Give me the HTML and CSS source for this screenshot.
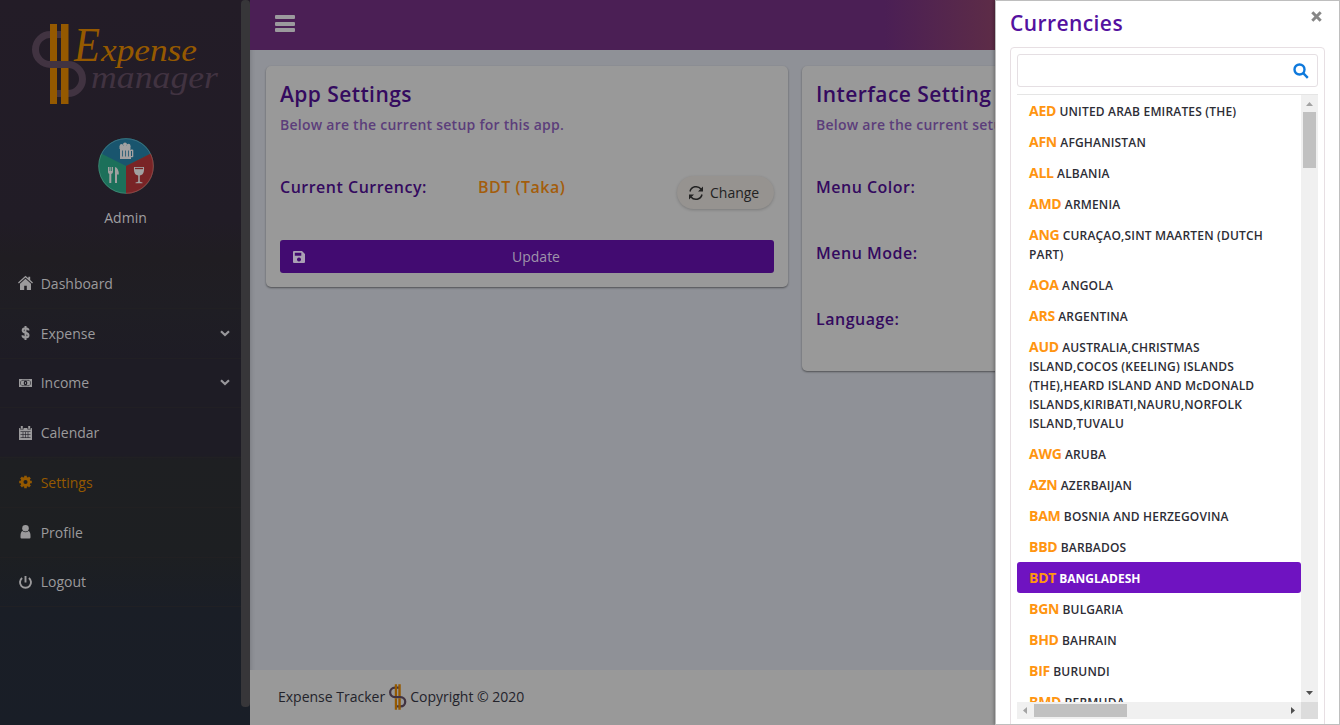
FILE: index.html
```html
<!DOCTYPE html>
<html lang="en">
<head>
<meta charset="utf-8">
<title>Expense Manager</title>
<link rel="stylesheet" href="styles.css">
</head>
<body>
<svg width="0" height="0" class="defs">
  <symbol id="dollar" viewBox="0 0 56 80">
    <path d="M34 10.500H18.500a15 15 0 0 0 0 30H36a14.500 14.500 0 0 1 0 29H25" fill="none" stroke="#413341" stroke-width="7"/>
    <path d="M18 0h7v37h-7zM29 0h7.500v37H29zM18 44h7v36h-7zM29 44h7.500v36H29z" fill="#955900"/>
  </symbol>
</svg>
<div class="app">
  <aside class="sidebar">
    <div class="side-body">
      <svg class="logo" width="200" height="90" viewBox="0 0 200 90">
        <use href="#dollar" x="0" y="4" width="56" height="80"/>
        <text class="logo-cap" x="42" y="41" textLength="26" lengthAdjust="spacingAndGlyphs">E</text>
        <text class="logo-top" x="69" y="41" textLength="96" lengthAdjust="spacingAndGlyphs">xpense</text>
        <text class="logo-bottom" x="59" y="68" textLength="127" lengthAdjust="spacingAndGlyphs">manager</text>
      </svg>
      <svg class="avatar" width="56" height="56" viewBox="0 0 56 56">
        <circle cx="28" cy="28" r="27.800" fill="#1c705a"/>
        <path d="M28 28 3.200 15.500A27.800 27.800 0 0 1 52.800 15.500Z" fill="#19556e"/>
        <path d="M28 28 52.800 15.500A27.800 27.800 0 0 1 28 55.800Z" fill="#792426"/>
        <circle cx="28" cy="28" r="27.300" fill="none" stroke="#fff" stroke-opacity=".14"/>
        <g fill="#a1a1a1">
          <path d="M22 10h10v1.500h2.500q.8 0 .8.800v6q0 1-1 1H33V21H22Zm11 3v5h1v-5Z"/>
          <circle cx="23.500" cy="7.800" r="1.800"/><circle cx="27" cy="6.600" r="2"/><circle cx="30.500" cy="7.700" r="2"/><path d="M21.500 8h11v3h-11z"/>
          <path d="M10 29v5q0 1.500 1.300 1.900V45h2v-9.100q1.700-.4 1.700-1.900v-5h-1v4h-.7v-4h-1v4h-.8v-4ZM17 29q3.800 1 3.800 7.500H19V45h-2Z"/>
          <path d="M36 29h10q.5 5-1.500 7.200-1 1-2.700 1.300v6q.4.700 2.700.9v.9h-7v-.9q2.300-.2 2.700-.9v-6q-1.800-.3-2.800-1.300Q35.600 34 36 29Z"/>
        </g>
        <path d="M24.500 12.500v6M27.500 12.500v6M30.500 12.500v6" stroke="#19556e" stroke-width=".8"/>
        <path d="M37 30.500h8" stroke="#792426" stroke-width="1.300"/>
      </svg>
      <div class="user">Admin</div>
      <nav class="menu">
        <a class="item"><svg class="ico" viewBox="0 0 16 16"><path d="M8 .8.500 7.400l.9 1L8 2.600l6.600 5.800.9-1-2.800-2.500V1.800h-1.900v1.400ZM8 3.800 2.500 8.700V15h4.200v-4.300h2.600V15h4.200V8.700Z"/></svg><span>Dashboard</span></a>
        <a class="item"><svg class="ico" viewBox="0 0 16 16"><path d="M11 5.500C11 4 9.800 3.300 8 3.300S5.200 4 5.200 5.500C5.200 8.600 11 7 11 10.300c0 1.600-1.300 2.300-3 2.300s-3-.8-3-2.400M8 1v14" fill="none" stroke="currentColor" stroke-width="2"/></svg><span>Expense</span><svg class="chev" viewBox="0 0 10 7"><path d="m1 1.200 4 3.800 4-3.800"/></svg></a>
        <a class="item"><svg class="ico" viewBox="0 0 16 16"><path d="M1.500 4h13v8h-13z"/><path class="line" d="M4.500 5.300h7l1.500 1.500v2.400l-1.500 1.500h-7L3 9.200V6.800Z"/><ellipse class="hole" cx="8" cy="8" rx="1.800" ry="2.200"/><path d="M7.600 6.900h.8v2.200h-.8z"/></svg><span>Income</span><svg class="chev" viewBox="0 0 10 7"><path d="m1 1.200 4 3.800 4-3.800"/></svg></a>
        <a class="item"><svg class="ico" viewBox="0 0 16 16"><path d="M1.500 3h13v12h-13zM3.300 1h2v3h-2zM10.700 1h2v3h-2z"/><path class="line" d="M3 6.500h10M3 9.500h10M3 12.500h10M5.500 7v6M8 7v6M10.500 7v6M2.800 2.500v1.700h3V2.500M10.200 2.500v1.700h3V2.500"/></svg><span>Calendar</span></a>
        <a class="item active"><svg class="ico" viewBox="0 0 16 16"><path d="M6.700 1.700h2.600v2.600H6.700zM6.700 11.700h2.600v2.600H6.700zM1.700 6.700h2.600v2.600H1.700zM11.700 6.700h2.600v2.600h-2.600zM2.600 4.500l1.900-1.900 1.800 1.800-1.900 1.900zM9.700 11.600l1.900-1.900 1.800 1.800-1.900 1.900zM2.600 11.500l1.800-1.800 1.900 1.900-1.800 1.800zM9.700 4.400l1.800-1.800 1.900 1.900-1.800 1.800z"/><circle cx="8" cy="8" r="3.500" fill="none" stroke="currentColor" stroke-width="2.900"/></svg><span>Settings</span></a>
        <a class="item"><svg class="ico" viewBox="0 0 16 16"><circle cx="8" cy="4.200" r="3.300"/><path d="M5 7q3 2.400 6 0 2 .8 2 5v1.500q0 1-1 1H4q-1 0-1-1V12q0-4.200 2-5Z"/></svg><span>Profile</span></a>
        <a class="item"><svg class="ico" viewBox="0 0 16 16"><path d="M4.600 4a5.500 5.500 0 1 0 6.800 0M8 2v6.500" fill="none" stroke="currentColor" stroke-width="1.900"/></svg><span>Logout</span></a>
      </nav>
    </div>
    <div class="side-scroll"></div>
  </aside>

  <div class="page">
    <header class="topbar"><div class="burger"><i></i><i></i><i></i></div></header>
    <main class="content">
      <section class="card">
        <h2>App Settings</h2>
        <p>Below are the current setup for this app.</p>
        <div class="row currency">
          <b>Current Currency:</b><b class="value">BDT (Taka)</b>
          <button class="change"><svg width="16" height="16" viewBox="0 0 16 16"><path d="M2 6.500A6.300 6.300 0 0 1 13 4M14 9.500A6.300 6.300 0 0 1 3 12" fill="none" stroke="currentColor" stroke-width="1.500"/><path d="M15 1.500v5h-5zM1 14.500v-5h5z"/></svg>Change</button>
        </div>
        <button class="update"><svg width="14" height="14" viewBox="0 0 14 14"><path fill-rule="evenodd" d="M1 2q0-1 1-1h8l3 3v8q0 1-1 1H2q-1 0-1-1Zm1.800.8v3h6.500v-3ZM7 7.500a2 2 0 1 0 .01 0Z"/></svg><span>Update</span></button>
      </section>
      <section class="card interface">
        <h2>Interface Setting</h2>
        <p>Below are the current setup for this app.</p>
        <div class="row"><b>Menu Color:</b></div>
        <div class="row"><b>Menu Mode:</b></div>
        <div class="row"><b>Language:</b></div>
      </section>
    </main>
    <footer class="footer"><span>Expense Tracker</span><svg width="18" height="26"><use href="#dollar" width="18" height="26"/></svg><span class="copy">Copyright © 2020</span></footer>
  </div>

  <aside class="drawer">
    <div class="drawer-head"><h2>Currencies</h2><svg class="close" width="11" height="11" viewBox="0 0 11 11"><path d="m1.300 1.300 8.400 8.400m0-8.400-8.400 8.400"/></svg></div>
    <div class="panel">
      <div class="search"><svg width="16" height="16" viewBox="0 0 16 16"><circle cx="6.500" cy="6.500" r="5"/><path d="m10.200 10.200 4.600 4.600"/></svg></div>
      <div class="list">
        <ul>
          <li><b>AED</b> UNITED ARAB EMIRATES (THE)</li>
          <li><b>AFN</b> AFGHANISTAN</li>
          <li><b>ALL</b> ALBANIA</li>
          <li><b>AMD</b> ARMENIA</li>
          <li><b>ANG</b> CURAÇAO,SINT MAARTEN (DUTCH<br>PART)</li>
          <li><b>AOA</b> ANGOLA</li>
          <li><b>ARS</b> ARGENTINA</li>
          <li><b>AUD</b> AUSTRALIA,CHRISTMAS<br>ISLAND,COCOS (KEELING) ISLANDS<br>(THE),HEARD ISLAND AND McDONALD<br>ISLANDS,KIRIBATI,NAURU,NORFOLK<br>ISLAND,TUVALU</li>
          <li><b>AWG</b> ARUBA</li>
          <li><b>AZN</b> AZERBAIJAN</li>
          <li><b>BAM</b> BOSNIA AND HERZEGOVINA</li>
          <li><b>BBD</b> BARBADOS</li>
          <li class="selected"><b>BDT</b> BANGLADESH</li>
          <li><b>BGN</b> BULGARIA</li>
          <li><b>BHD</b> BAHRAIN</li>
          <li><b>BIF</b> BURUNDI</li>
          <li><b>BMD</b> BERMUDA</li>
        </ul>
        <div class="vbar"><svg width="7" height="4"><path d="M0 4 3.500 0 7 4Z" fill="#a3a3a3"/></svg><i></i><svg class="end" width="7" height="4"><path d="M0 0h7L3.500 4Z" fill="#505050"/></svg></div>
        <div class="hbar"><svg width="4" height="7"><path d="M4 0v7L0 3.500Z" fill="#a3a3a3"/></svg><i></i><svg class="end" width="4" height="7"><path d="M0 0v7l4-3.500Z" fill="#505050"/></svg></div>
        <div class="corner"></div>
      </div>
    </div>
  </aside>
</div>
</body>
</html>
```
FILE: styles.css
```css
* { box-sizing: border-box; }
body { margin: 0; font-family: "Open Sans", "Noto Sans", sans-serif; font-size: 14px; overflow: hidden; }
h2, p, ul { margin: 0; padding: 0; }
.defs { position: absolute; }
.app { display: grid; grid-template-columns: 250px 745px 345px; width: 1340px; height: 725px; background: #8f9197; overflow: hidden; }

.sidebar { display: flex; background: linear-gradient(#231c27 0, #211c26 220px, #201d22 258px, #1f1e24 308px, #1e1c25 360px, #1e1c25 455px, #1e1f22 460px, #1d1f22 555px, #1a1e26 608px, #191e27 100%); }
.side-body { width: 241px; display: flex; flex-direction: column; }
.side-scroll { width: 9px; height: 707px; background: #373639; border-radius: 4px; }
.logo { display: block; margin: 20px 0 0 32px; overflow: visible; }
.logo text { font-family: "Z003", "URW Chancery L", "Liberation Serif", cursive; font-style: italic; }
.logo-cap { font-size: 49px; fill: #955900; }
.logo-top { font-size: 31px; fill: #955900; }
.logo-bottom { font-size: 31px; fill: #413341; }
.avatar { display: block; margin: 28px 0 0 98px; }
.user { width: 251px; margin-top: 13px; text-align: center; line-height: 21px; color: #a09fa1; }
.menu { margin-top: 31px; }
.item { display: flex; align-items: center; height: 49.750px; padding: 0 11px 0 17px; color: #9b9a9c; border-bottom: 1px solid rgba(35, 34, 35, .65); }
.item.active { color: #955900; }
.ico { width: 17px; height: 16px; margin-right: 6.700px; fill: currentColor; }
.ico .hole { fill: #1e1c25; }
.ico .line { fill: none; stroke: #1e1c25; stroke-width: .6; }
.chev { width: 10px; height: 7px; margin-left: auto; fill: none; stroke: #98979b; stroke-width: 2.200; }

.page { display: flex; flex-direction: column; min-width: 0; overflow: hidden; box-shadow: inset 4px 0 4px -3px rgba(0, 0, 0, .15); }
.topbar { flex: none; height: 50px; padding: 15px 25px; background: linear-gradient(90deg, #4b1f55 635px, #5d2c47 745px); }
.burger { width: 20px; display: flex; flex-direction: column; gap: 2.500px; }
.burger i { height: 4px; border-radius: 1px; background: #9b9a9d; }
.content { flex: 1; display: flex; align-items: flex-start; gap: 14px; padding: 16px; }
.card { flex: none; width: 522px; height: 221px; padding: 14px; background: #999; border-radius: 5px; box-shadow: 0 1px 2px rgba(0, 0, 0, .45); }
.card.interface { height: 305px; }
.card h2, .drawer h2 { font-size: 21px; font-weight: 600; line-height: 28px; letter-spacing: .42px; color: #340a5f; }
.card p { margin-top: 7px; font-size: 14px; font-weight: 600; line-height: 20px; letter-spacing: .245px; color: #5c3e7b; }
.row { display: flex; align-items: flex-start; height: 66px; font-size: 16px; line-height: 24px; letter-spacing: .5px; color: #340a5f; }
.row b { font-weight: 600; }
.card p + .row { margin-top: 40px; }
.currency b:first-child { width: 198px; }
.currency { height: 65px; }
.currency .value { color: #a35d0c; }
button { border: 0; font: inherit; }
.change { display: flex; align-items: center; gap: 6px; width: 97px; height: 33px; margin: 1px 0 0 auto; padding: 0 11px; font-size: 14px; line-height: 20px; color: #222; background: #969390; border-radius: 17px; box-shadow: 0 1px 3px rgba(0, 0, 0, .2); fill: currentColor; }
.change svg { flex: none; }
.update { display: flex; align-items: center; width: 494px; height: 33px; padding: 0 12px; color: #9f94ab; fill: #aaa0b4; background: #420b71; border-radius: 3px; }
.update span { flex: 1; text-align: center; padding-left: 4px; }
.footer { flex: none; display: flex; align-items: center; height: 55px; padding: 0 28px 2px; background: #999; color: #23232b; }
.footer svg { margin: 0 3px 0 4px; }

.drawer { display: flex; flex-direction: column; height: 725px; padding: 8px 14px 0; border: 1px solid #bebebe; background: #fff; overflow: hidden; box-shadow: -1px 0 3px rgba(0, 0, 0, .3); }
.drawer-head { flex: none; display: flex; justify-content: space-between; height: 38px; }
.drawer h2 { color: #5411a0; }
.close { margin: 2px 3px 0 0; stroke: #868686; stroke-width: 3; }
.panel { flex: none; height: 690px; width: 315px; padding: 6px; border: 1px solid #e7dfe3; border-radius: 4px; }
.search { display: flex; justify-content: flex-end; height: 33px; padding: 8px 8px; border: 1px solid #e5dfe3; border-radius: 3px; }
.search svg { fill: none; stroke: #0e79dc; stroke-width: 2.400; }
.list { display: grid; grid-template: 607px 17px / 284px 17px; margin-top: 7px; border-top: 1px solid #e5e5e5; }
.list ul { list-style: none; overflow: hidden; height: 607px; }
.list li { padding: 7px 12px 5px; font-size: 12px; line-height: 19px; font-weight: 600; letter-spacing: .18px; color: #2d2d35; white-space: nowrap; }
.list li b { font-size: 14px; line-height: 16px; font-weight: 700; letter-spacing: -.25px; color: #ff9511; }
.list .selected { background: #6f13c1; border-radius: 3px; color: #fff; font-weight: 700; letter-spacing: 0; }
.vbar { display: flex; flex-direction: column; align-items: center; padding: 7px 0; background: #f0f0f0; }
.vbar i { width: 13px; height: 56px; margin-top: 6px; background: #c1c1c1; }
.hbar { display: flex; align-items: center; padding: 0 6px; background: #f0f0f0; }
.hbar i { width: 93px; height: 13px; margin-left: 7px; background: #c1c1c1; }
.vbar .end { margin-top: auto; }
.hbar .end { margin-left: auto; }
.corner { background: #dcdcdc; }
```
